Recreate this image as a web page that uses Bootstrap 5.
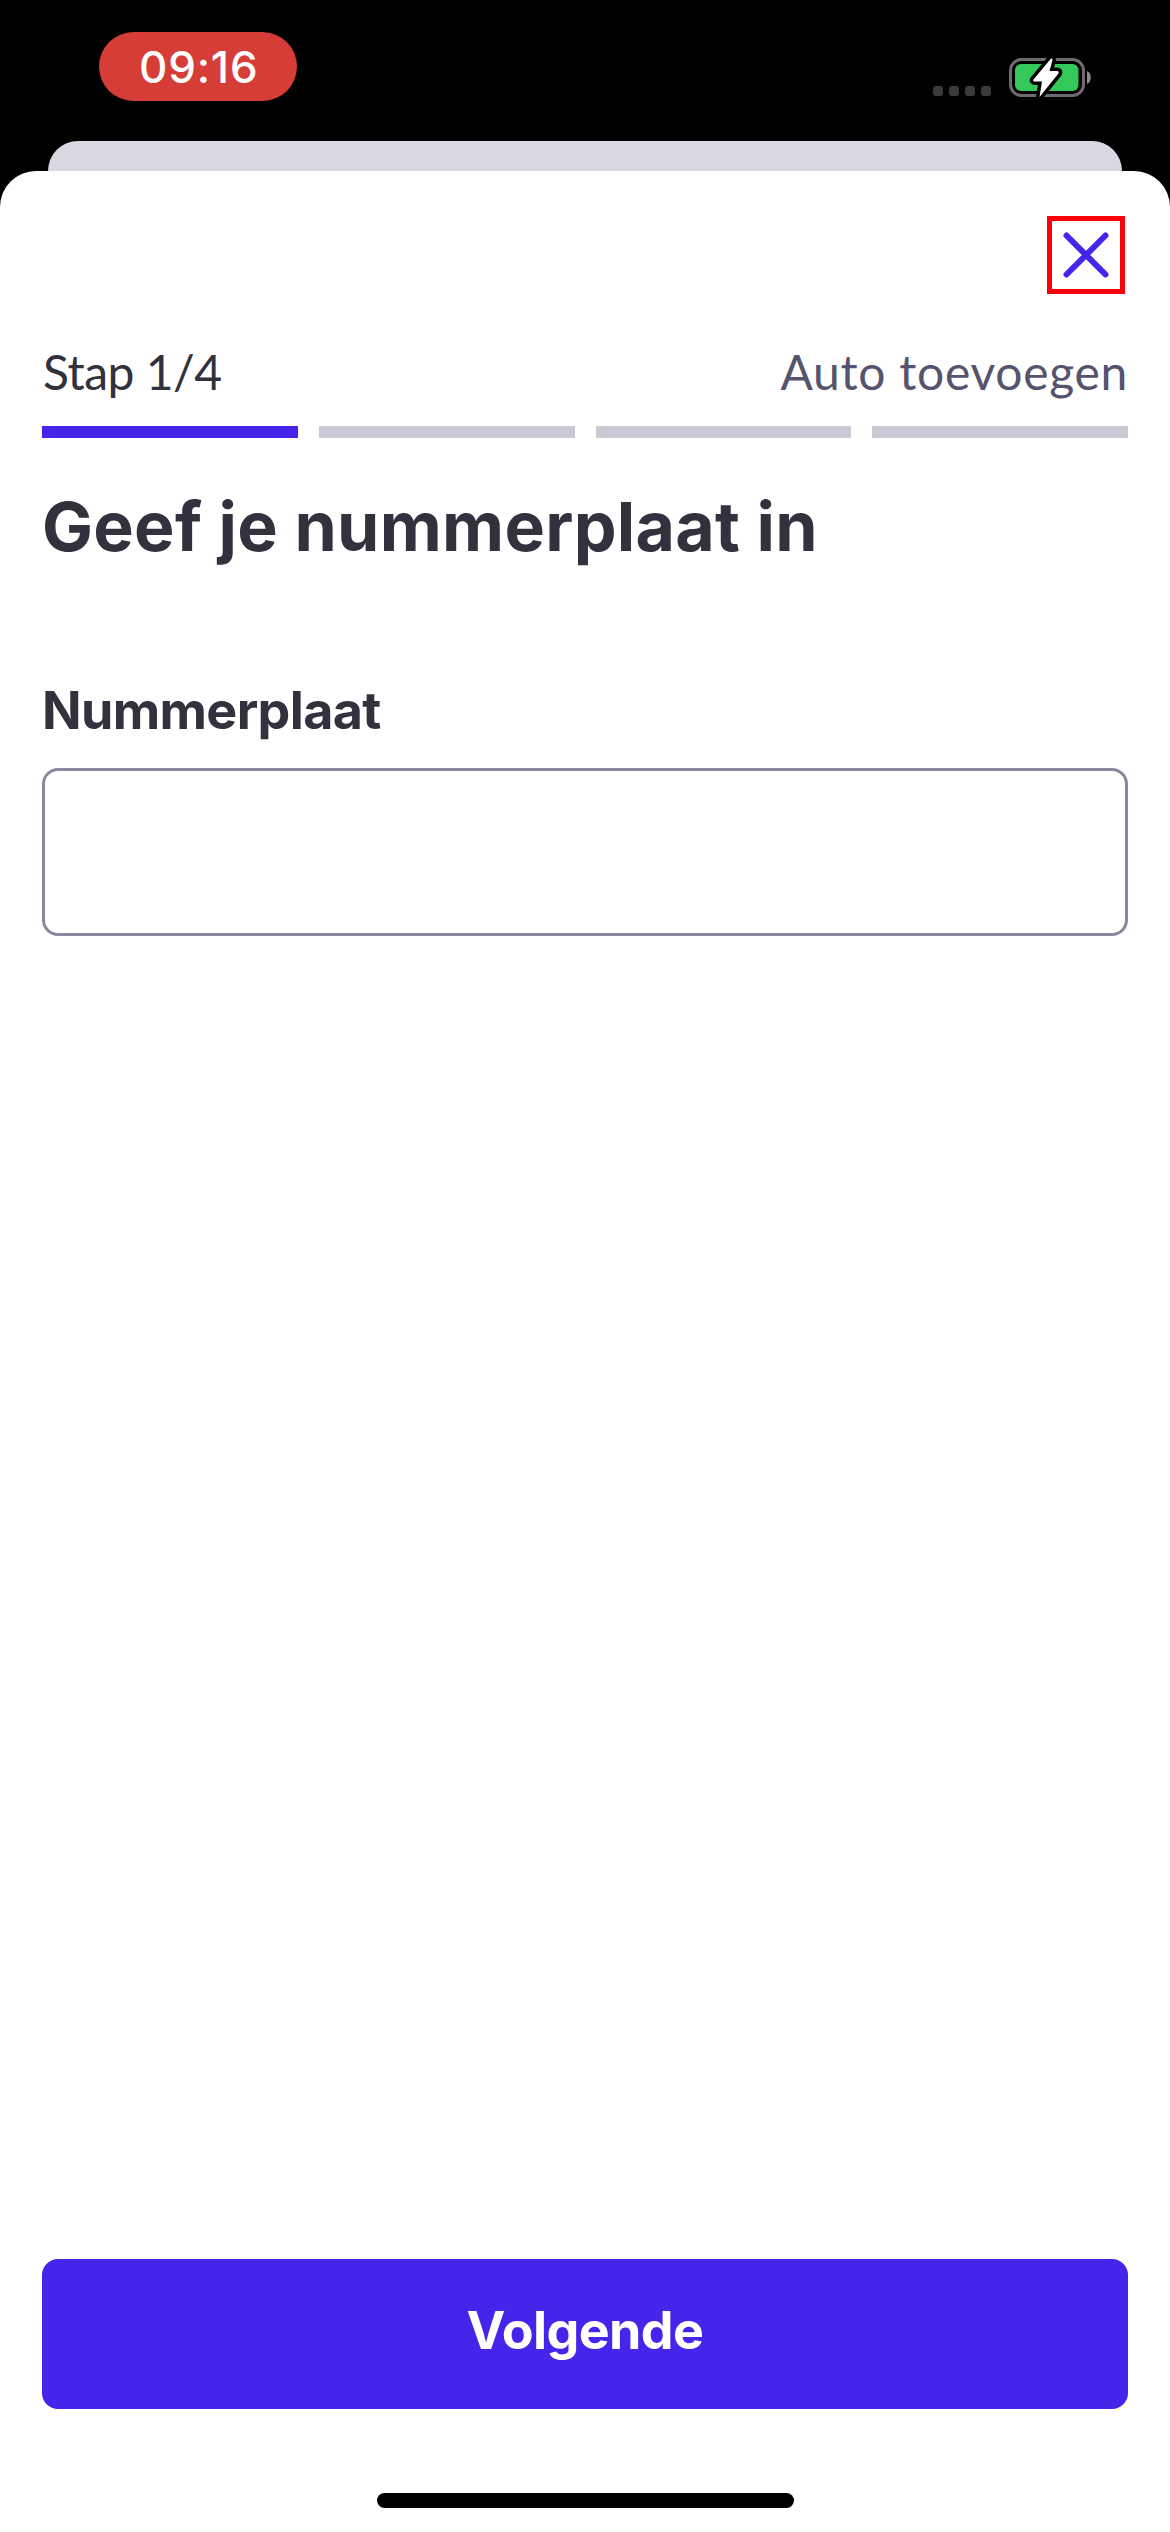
<!DOCTYPE html>
<html lang="nl">
<head>
<meta charset="utf-8">
<meta name="viewport" content="width=device-width, initial-scale=1">
<title>Auto toevoegen</title>
<link href="https://cdn.jsdelivr.net/npm/bootstrap@5.3.0/dist/css/bootstrap.min.css" rel="stylesheet">
<style>
  body { font-family: Lato, "Open Sans", sans-serif; color: #33313e; background: #000; }
  .screen { width: 1170px; height: 2532px; background: #000; }
  .status-bar { height: 141px; padding: 32px 79px 0 99px; }
  .clock-pill { width: 198px; height: 69px; border-radius: 35px; background: #d63d36; color: #fff;
    font: 500 44px/71px Inter, sans-serif; letter-spacing: .8px; padding-left: 40px; }
  .status-icons { width: 160px; height: 45px; margin-top: 24px; }
  .sheet-behind { height: 30px; margin: 0 48px; background: #d8d8e1; border-radius: 30px 30px 0 0; }
  .sheet { background: #fff; border-radius: 36px 36px 0 0; padding: 45px 42px 24px; }
  .close-btn { width: 78px; height: 78px; margin-right: 3px; border: 5px solid #fb0007; border-radius: 0; }
  .step-line { margin-top: 49px; font-size: 48px; line-height: 58px; }
  .step-now { letter-spacing: -.5px; padding-left: 1px; }
  .step-name { letter-spacing: .7px; color: #56536e; }
  .steps { gap: 21px; margin-top: 25px; }
  .step { height: 12px; background: #cbc9d4; }
  .step.done { background: #4624e9; }
  .title, .plate-label, .next-btn { font-family: Inter, sans-serif; font-weight: 700; }
  .title { margin: 46px 0 0; font-size: 68px; line-height: 84px; letter-spacing: .28px; }
  .plate-label { margin: 111px 0 0; font-size: 52px; line-height: 64px; letter-spacing: -.64px; }
  .plate-input { margin-top: 25px; height: 168px; border: 3px solid #8a879c; border-radius: 16px; font-size: 53px; }
  .next-btn, .next-btn:hover { height: 150px; padding: 0 0 6px; border: 0; border-radius: 16px; background: #4624e9; color: #fff;
    font-size: 52px; line-height: 64px; letter-spacing: -.6px; }
  .home-bar { width: 417px; height: 15px; margin-top: 84px; border-radius: 8px; background: #000; }
</style>
</head>
<body>
<div class="screen d-flex flex-column overflow-hidden">
  <header class="status-bar d-flex justify-content-between align-items-start flex-shrink-0">
    <div class="clock-pill">09:16</div>
    <svg class="status-icons" viewBox="0 0 160 45" aria-hidden="true">
      <g fill="#3b3b3c">
        <rect x="2" y="30" width="10" height="10" rx="3"/><rect x="18" y="30" width="10" height="10" rx="3"/>
        <rect x="34" y="30" width="10" height="10" rx="3"/><rect x="50" y="30" width="10" height="10" rx="3"/>
      </g>
      <rect x="79.5" y="3.500" width="73" height="36" rx="11" fill="none" stroke="#6d6c70" stroke-width="3"/>
      <path d="M156 15c5 2 5 11 0 13z" fill="#8c8c8e"/>
      <rect x="84" y="8" width="63.500" height="27" rx="6" fill="#34c759"/>
      <path d="M120 2.500 102.500 23.500Q101.500 25.500 104 25.500H111L108.500 41 127.500 17.500Q128.500 15 126 15H118.500L121.500 4Q121.500 2 120 2.500Z" fill="#fff" stroke="#000" stroke-width="7" stroke-linejoin="round" paint-order="stroke"/>
    </svg>
  </header>
  <div class="sheet-behind flex-shrink-0"></div>
  <main class="sheet d-flex flex-column flex-grow-1">
    <button type="button" class="close-btn btn p-0 align-self-end d-flex align-items-center justify-content-center" aria-label="Sluiten">
      <svg width="50" height="50" viewBox="0 0 50 50" fill="none" stroke="#4624e9" stroke-width="6" stroke-linecap="round"><path d="M5.500 5.500 44.500 44.500M44.500 5.500 5.500 44.500"/></svg>
    </button>
    <div class="step-line d-flex justify-content-between">
      <span class="step-now">Stap 1/4</span>
      <span class="step-name">Auto toevoegen</span>
    </div>
    <div class="steps d-flex">
      <div class="step done flex-fill"></div><div class="step flex-fill"></div><div class="step flex-fill"></div><div class="step flex-fill"></div>
    </div>
    <h1 class="title">Geef je nummerplaat in</h1>
    <label class="plate-label" for="plate">Nummerplaat</label>
    <input id="plate" type="text" class="plate-input form-control">
    <button type="button" class="next-btn btn w-100 mt-auto">Volgende</button>
    <div class="home-bar align-self-center flex-shrink-0"></div>
  </main>
</div>
<script src="https://cdn.jsdelivr.net/npm/bootstrap@5.3.0/dist/js/bootstrap.bundle.min.js"></script>
</body>
</html>
